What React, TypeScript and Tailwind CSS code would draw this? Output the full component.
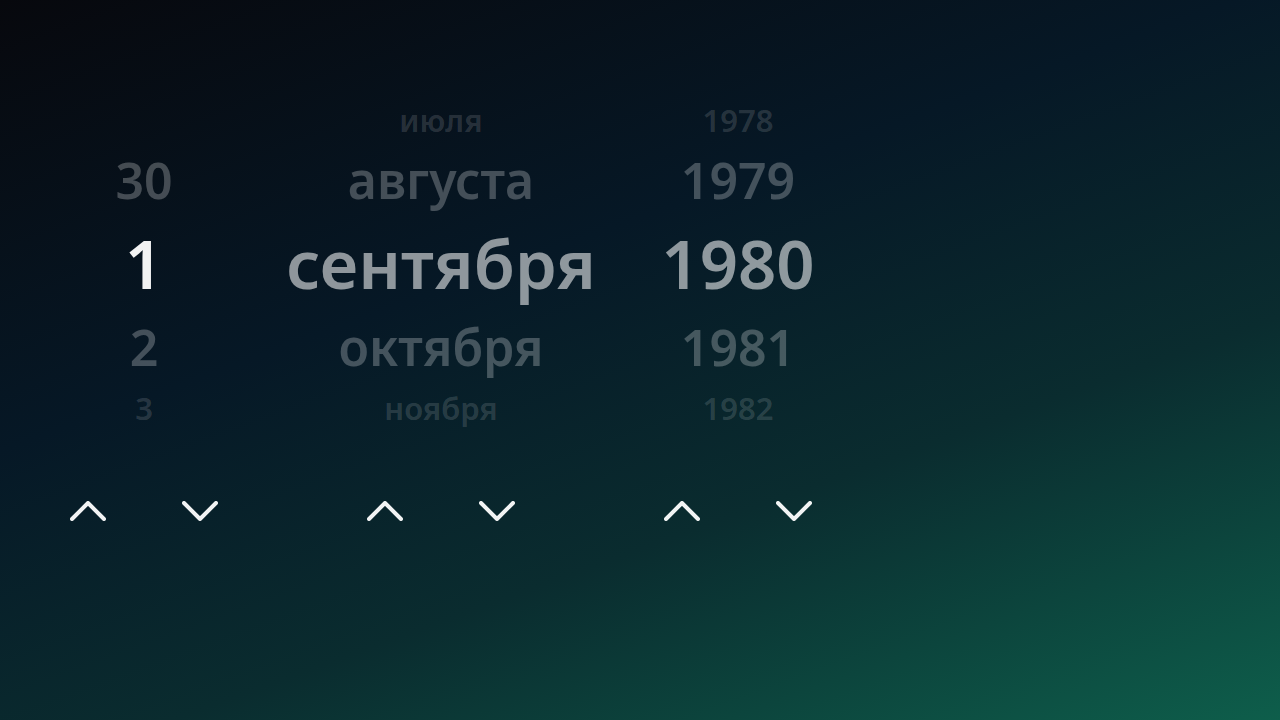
import { useState } from 'react'

const months = ['января', 'февраля', 'марта', 'апреля', 'мая', 'июня', 'июля', 'августа', 'сентября', 'октября', 'ноября', 'декабря']

type ColumnProps = {
	items: (string | null)[]
	active: boolean
	width: string
}

// five visible slots: far, near, selected, near, far
const slotClass = [
	'h-[40px] text-[31px] text-white/15',
	'h-[80px] text-[50px] text-white/25',
	'h-[86px] text-[67px]',
	'h-[82px] text-[50px] text-white/25',
	'h-[40px] text-[31px] text-white/15',
]

const Column = ({ items, active, width }: ColumnProps) => (
	<div className={`flex flex-col ${width}`}>
		{items.map((item, i) => (
			<div
				key={i}
				className={`flex items-center justify-center font-semibold leading-none whitespace-nowrap ${slotClass[i]} ${i === 2 ? (active ? 'text-white/95' : 'text-white/55') : ''}`}
			>
				{item}
			</div>
		))}
	</div>
)

const Chevron = ({ up }: { up?: boolean }) => (
	<svg width="36" height="20" viewBox="0 0 36 20" fill="none" stroke="currentColor" strokeWidth="4" strokeLinecap="round" strokeLinejoin="round">
		<path d={up ? 'M2 18 L18 2 L34 18' : 'M2 2 L18 18 L34 2'} />
	</svg>
)

const Arrows = ({ onUp, onDown, width }: { onUp: () => void, onDown: () => void, width: string }) => (
	<div className={`flex justify-center gap-16 ${width}`}>
		<button onClick={onUp} className="flex h-12 w-12 items-center justify-center text-white/95">
			<Chevron up />
		</button>
		<button onClick={onDown} className="flex h-12 w-12 items-center justify-center text-white/95">
			<Chevron />
		</button>
	</div>
)

export default function App() {
	const [ day, setDay ] = useState(1)
	const [ month, setMonth ] = useState(8)
	const [ year, setYear ] = useState(1980)

	const dayItems = [-2, -1, 0, 1, 2].map((d) => {
		const v = day + d
		if (v < 1) {
			// show previous month's tail only one step back
			return d === -1 ? String(30 + v) : null
		}
		return String(v)
	})
	const monthItems = [-2, -1, 0, 1, 2].map((d) => months[(month + d + 12) % 12])
	const yearItems = [-2, -1, 0, 1, 2].map((d) => String(year + d))

	return (
		<div
			className="h-[720px] w-[1280px] overflow-hidden bg-[linear-gradient(160deg,#07080d_0%,#061826_38%,#0a2c2f_66%,#0e5e4b_100%)] text-white"
			style={{ fontFamily: '"Noto Sans", "Open Sans", sans-serif' }}
		>
			<div className="flex gap-[41px] pl-12 pt-[100px]">
				<Column items={dayItems} active width="w-[192px]" />
				<Column items={monthItems} active={false} width="w-[320px]" />
				<Column items={yearItems} active={false} width="w-[192px]" />
			</div>
			<div className="mt-[59px] flex gap-[41px] pl-12">
				<Arrows width="w-[192px]" onUp={() => setDay(day - 1)} onDown={() => setDay(day + 1)} />
				<Arrows width="w-[320px]" onUp={() => setMonth((month + 11) % 12)} onDown={() => setMonth((month + 1) % 12)} />
				<Arrows width="w-[192px]" onUp={() => setYear(year - 1)} onDown={() => setYear(year + 1)} />
			</div>
		</div>
	)
}
